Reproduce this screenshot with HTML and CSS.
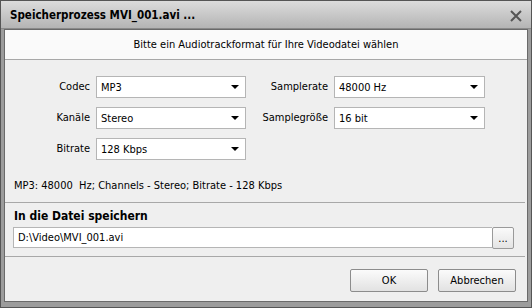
FILE: index.html
```html
<!DOCTYPE html>
<html lang="de">
<head>
  <meta charset="UTF-8">
  <title>Speicherprozess MVI_001.avi ...</title>
  <link rel="stylesheet" href="styles.css">
</head>
<body>
  <div class="window">
    <div class="titlebar">
      <span class="title">Speicherprozess MVI_001.avi ...</span>
      <svg class="close" width="14" height="12" viewBox="0 0 14 12">
        <path d="M2 1 L12 11 M12 1 L2 11" stroke="#555" stroke-width="2"/>
      </svg>
    </div>
    <div class="content">
      <div class="header">Bitte ein Audiotrackformat für Ihre Videodatei wählen</div>

      <div class="form">
        <label>Codec</label>
        <div class="select"><span>MP3</span><i class="arrow"></i></div>
        <label>Samplerate</label>
        <div class="select"><span>48000 Hz</span><i class="arrow"></i></div>

        <label>Kanäle</label>
        <div class="select"><span>Stereo</span><i class="arrow"></i></div>
        <label>Samplegröße</label>
        <div class="select"><span>16 bit</span><i class="arrow"></i></div>

        <label>Bitrate</label>
        <div class="select"><span>128 Kbps</span><i class="arrow"></i></div>
      </div>

      <div class="info">MP3: 48000&nbsp; Hz; Channels - Stereo; Bitrate - 128 Kbps</div>

      <div class="save">
        <div class="save-title">In die Datei speichern</div>
        <div class="path-row">
          <div class="path">D:\Video\MVI_001.avi</div>
          <button class="browse">...</button>
        </div>
      </div>

      <div class="buttons">
        <button class="btn">OK</button>
        <button class="btn">Abbrechen</button>
      </div>
    </div>
  </div>
</body>
</html>
```

FILE: styles.css
```css
body {
  margin: 0;
  font-family: "DejaVu Sans Condensed", "DejaVu Sans", sans-serif;
  font-size: 11px;
  color: #000;
}
.window {
  width: 532px;
  height: 308px;
  box-sizing: border-box;
  border: 1px solid #555;
  background: #9c9c9c;
  padding: 0 3px 5px 3px;
  display: flex;
  flex-direction: column;
}
.titlebar {
  height: 27px;
  display: flex;
  align-items: center;
  justify-content: space-between;
  padding: 0 8px 0 9px;
  background: linear-gradient(#dcdcdc, #b4b4b4);
  margin: 0 -3px;
  border-bottom: 1px solid #8a8a8a;
}
.title {
  font-weight: bold;
  font-size: 11.5px;
}
.close {
  margin-top: 2px;
}
.content {
  flex: 1;
  background: #efefef;
  border: 1px solid #6a6a6a;
  display: flex;
  flex-direction: column;
}
.header {
  height: 29px;
  line-height: 29px;
  text-align: center;
  background: #fafafa;
  border-bottom: 1px solid #a8a8a8;
}
.form {
  display: grid;
  grid-template-columns: 85px 150px 76px 151px;
  column-gap: 6px;
  row-gap: 9px;
  margin-top: 16px;
  align-items: center;
}
.form label {
  text-align: right;
  line-height: 14px;
}
.select {
  height: 22px;
  box-sizing: border-box;
  border: 1px solid #b5b5b5;
  background: #fff;
  display: flex;
  align-items: center;
  justify-content: space-between;
  padding: 0 6px 0 4px;
}
.arrow {
  width: 0;
  height: 0;
  border-left: 4px solid transparent;
  border-right: 4px solid transparent;
  border-top: 4px solid #000;
}
.info {
  padding: 19px 0 0 9px;
  height: 23px;
  border-bottom: 1px solid #a8a8a8;
  margin-right: 2px;
}
.save {
  padding: 6px 11px 7px 8px;
  border-bottom: 1px solid #a8a8a8;
  margin-right: 2px;
}
.save-title {
  font-weight: bold;
  font-size: 12px;
  margin-left: 1px;
  margin-bottom: 4px;
}
.path-row {
  display: flex;
}
.path {
  flex: 1;
  height: 21px;
  box-sizing: border-box;
  line-height: 19px;
  padding-left: 4px;
  background: #fff;
  border: 1px solid #b5b5b5;
  border-right: none;
}
.browse {
  width: 22px;
  height: 22px;
  font-family: inherit;
  font-size: 11px;
  padding: 0;
  background: linear-gradient(#fafafa, #e4e4e4);
  border: 1px solid #9a9a9a;
  border-radius: 2px;
}
.buttons {
  display: flex;
  justify-content: flex-end;
  gap: 10px;
  padding: 12px 11px 0 0;
}
.btn {
  width: 78px;
  height: 23px;
  font-family: inherit;
  font-size: 11px;
  background: linear-gradient(#fbfbfb, #e2e2e2);
  border: 1px solid #8c8c8c;
  border-radius: 2px;
}
```
